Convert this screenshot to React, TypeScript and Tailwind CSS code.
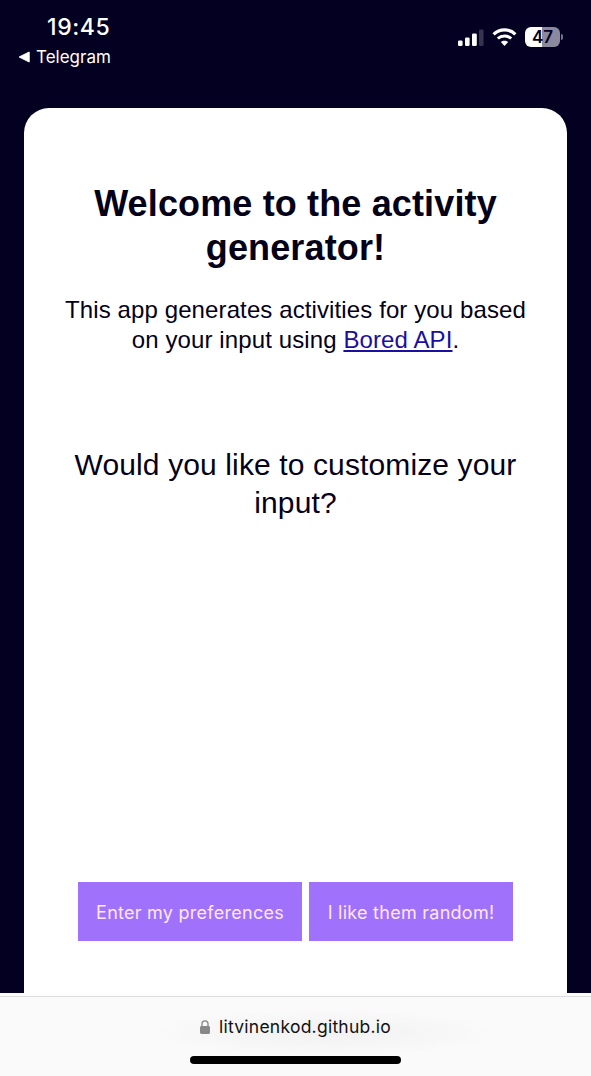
function SignalIcon() {
  return (
    <svg width="26" height="17" viewBox="0 0 26 17" className="shrink-0">
      <rect x="0" y="11.5" width="4.6" height="5.5" rx="1.3" fill="#fff" />
      <rect x="7" y="8.5" width="4.6" height="8.5" rx="1.3" fill="#fff" />
      <rect x="14" y="4.5" width="4.8" height="12.5" rx="1.3" fill="#fff" />
      <rect x="21" y="0.5" width="4.6" height="16.5" rx="1.3" fill="#353350" />
    </svg>
  );
}

function WifiIcon() {
  return (
    <svg width="25" height="18" viewBox="0 0 25 18" fill="none" className="shrink-0">
      <path d="M1.6 6.3C7.7.4 17.3.4 23.4 6.3" stroke="#fff" strokeWidth="3.2" />
      <path d="M5.8 10.5C9.6 7 15.4 7 19.2 10.5" stroke="#fff" strokeWidth="3" />
      <path d="M12.5 18 8.8 14.1c2.1-1.9 5.3-1.9 7.4 0L12.5 18Z" fill="#fff" />
    </svg>
  );
}

function Battery() {
  return (
    <div className="flex items-center gap-[1px]">
      <div className="flex h-5 w-[35px] items-center justify-center rounded-[6px] bg-linear-to-r from-white from-48% to-[#8b899e] to-48% font-['Inter',sans-serif] text-[17px] leading-5 font-semibold text-[#030022]">
        47
      </div>
      <div className="h-[6px] w-[2px] rounded-r-full bg-[#77758b]" />
    </div>
  );
}

function StatusBar() {
  return (
    <header className="flex h-[108px] justify-between pr-7 pl-[18px] font-['Inter',sans-serif] text-white">
      <div className="pt-[13px]">
        <div className="pl-[29px] text-[23px] leading-7 font-medium tracking-[0.6px]">19:45</div>
        <div className="mt-1 flex items-center gap-[6px] text-[17px] leading-6">
          <svg width="12" height="12" viewBox="0 0 12 12">
            <path d="M1.2 6 11.2 1V11Z" fill="#fff" stroke="#fff" strokeLinejoin="round" />
          </svg>
          Telegram
        </div>
      </div>
      <div className="mt-[27px] flex h-5 items-center">
        <SignalIcon />
        <div className="ml-[8px] flex">
          <WifiIcon />
        </div>
        <div className="ml-[8px]">
          <Battery />
        </div>
      </div>
    </header>
  );
}

function AddressBar() {
  return (
    <footer className="flex h-[83px] shrink-0 flex-col bg-[#fafafa]">
      <div className="h-1 border-b border-[#dedede] bg-[#fcfcfc]" />
      <div className="flex flex-1 flex-col items-center bg-[radial-gradient(ellipse_at_55%_45%,#f2f2f2_0%,#f5f5f5_18%,#fafafa_38%)]">
        <div className="mt-[18px] flex items-center gap-[9px] font-['Inter',sans-serif] text-[17.5px] leading-6 tracking-[0.25px] text-[#111]">
          <svg width="10" height="14" viewBox="0 0 10 14" fill="none">
            <rect x="0" y="6" width="10" height="8" rx="1.4" fill="#888" />
            <path d="M2 6.5V3.8a3 3 0 0 1 6 0v2.7" stroke="#888" strokeWidth="1.3" />
          </svg>
          litvinenkod.github.io
        </div>
        <div className="mt-[17px] mr-[1px] h-[8px] w-[211px] rounded-full bg-black" />
      </div>
    </footer>
  );
}

export default function App() {
  return (
    <div className="flex h-[1076px] w-[591px] flex-col overflow-hidden bg-[#030022]">
      <StatusBar />
      <main className="mr-6 ml-6 flex flex-1 flex-col items-center rounded-t-[25px] bg-white pt-[74px] text-center font-['Liberation_Sans',sans-serif] text-[#030018]">
        <h1 className="text-[36px] leading-[44px] font-bold tracking-[0.14px]">
          Welcome to the activity
          <br />
          generator!
        </h1>
        <p className="mt-[25px] text-[24px] leading-[30px] tracking-[0.11px]">
          This app generates activities for you based
          <br />
          on your input using{" "}
          <a href="#" className="text-[#1a0fa0] underline decoration-2 underline-offset-2">
            Bored API
          </a>
          .
        </p>
        <h2 className="mt-[91px] text-[30px] leading-[38px] tracking-[0.12px]">
          Would you like to customize your
          <br />
          input?
        </h2>
        <div className="mt-auto mb-[52px] flex gap-[7px] font-['Inter',sans-serif] text-[18px] tracking-[0.26px] text-[#ffe6ff]">
          <button className="h-[59px] w-[224px] bg-[#a071fb] pt-[2px]">Enter my preferences</button>
          <button className="h-[59px] w-[204px] bg-[#a071fb] pt-[2px]">I like them random!</button>
        </div>
      </main>
      <AddressBar />
    </div>
  );
}
